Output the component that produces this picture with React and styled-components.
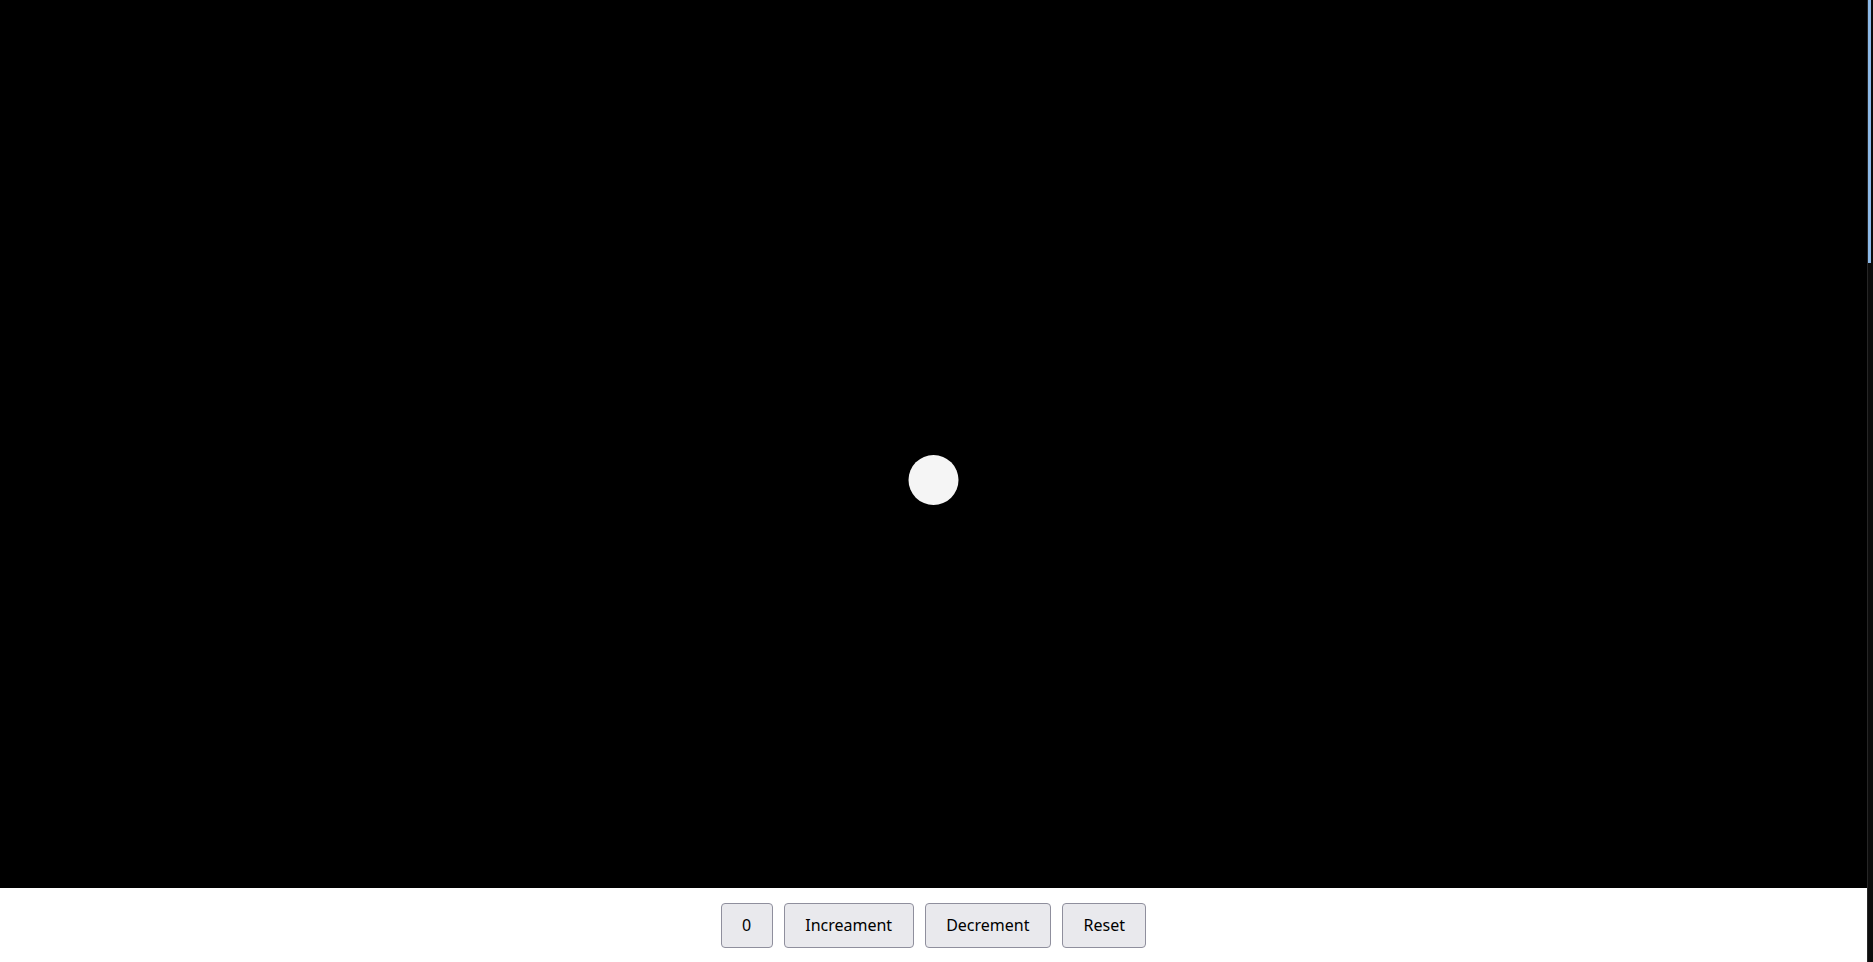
import React, { useState } from "react";
import styled, { createGlobalStyle } from "styled-components";

const Global = createGlobalStyle`
  html, body {
    margin: 0;
    padding: 0;
    background: #ffffff;
    font-family: "Noto Sans", "Open Sans", sans-serif;
    overflow: hidden;
  }
`;

const Shell = styled.div`
  display: flex;
  height: 100vh;
`;

const Viewport = styled.div`
  flex: 1;
  min-width: 0;
  overflow-y: auto;
  scrollbar-width: none;
  &::-webkit-scrollbar {
    display: none;
  }
`;

const ScrollRail = styled.div`
  width: 5px;
  flex: none;
  background: #0c0c0c;
  border-left: 1px solid #262626;
  display: flex;
  flex-direction: column;
`;

const ScrollThumb = styled.div`
  width: 3px;
  height: ${(p) => p.$size}px;
  background: #8cb9e8;
`;

const Page = styled.div`
  min-height: 3492px;
  display: flex;
  flex-direction: column;
`;

const Stage = styled.div`
  width: 100%;
  height: 888px;
  background: #000000;
`;

const StageDrawing = styled.svg`
  display: block;
  width: 100%;
  height: 100%;
`;

const Controls = styled.div`
  display: flex;
  justify-content: center;
  gap: 11px;
  margin-top: 15px;
`;

const Button = styled.button`
  font-family: "Noto Sans", "Open Sans", sans-serif;
  font-size: 16px;
  line-height: 21px;
  color: #000000;
  background: #e9e9ed;
  border: 1px solid #8f8f9d;
  border-radius: 4px;
  padding: 11px 20.5px;
  cursor: pointer;
  &:hover {
    background: #d0d0d7;
  }
`;

export default function App() {
  const [count, setCount] = useState(0);
  return (
    <>
      <Global />
      <Shell>
        <Viewport>
          <Page>
            <Stage>
              <StageDrawing>
                <circle cx="50%" cy="480" r="25" fill="#f5f5f5" />
              </StageDrawing>
            </Stage>
            <Controls>
              <Button>{count}</Button>
              <Button onClick={() => setCount((c) => c + 1)}>Increament</Button>
              <Button onClick={() => setCount((c) => c - 1)}>Decrement</Button>
              <Button onClick={() => setCount(0)}>Reset</Button>
            </Controls>
          </Page>
        </Viewport>
        <ScrollRail>
          <ScrollThumb $size={263} />
        </ScrollRail>
      </Shell>
    </>
  );
}
